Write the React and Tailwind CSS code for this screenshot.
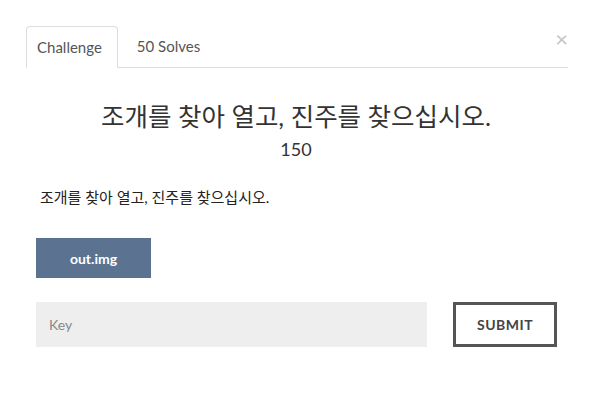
export default function App() {
  const font = { fontFamily: 'Lato, "Noto Sans CJK KR", sans-serif' };
  return (
    <div className="w-[592px] h-[401px] bg-white text-[#333]" style={font}>
      <div className="pt-[26px] px-[24px] relative">
        <button className="absolute right-[24px] top-[28px] text-[22px] leading-none text-[#c4c4c4]">×</button>
        <div className="ml-[2px] flex border-b border-[#dddddd] text-[15px]">
          <div className="-mb-px h-[42px] pl-[10px] pr-[15px] flex items-center border border-[#dddddd] border-b-white rounded-t-[4px] bg-white text-[#555]">
            Challenge
          </div>
          <div className="h-[41px] px-[19px] flex items-center text-[#555]">50 Solves</div>
        </div>

        <div className="text-center mt-[32px]">
          <h2 className="text-[25.5px] leading-[32px] text-[#333]">조개를 찾아 열고, 진주를 찾으십시오.</h2>
          <p className="text-[18px] leading-[24px] mt-[5px] text-[#333]">150</p>
        </div>

        <p className="mt-[26px] ml-[16px] text-[15px] leading-[20px] text-[#222]">조개를 찾아 열고, 진주를 찾으십시오.</p>

        <button className="mt-[31px] ml-[12px] w-[115px] h-[40px] bg-[#5b7290] text-white text-[14px] font-bold">
          out.img
        </button>

        <div className="mt-[24px] ml-[12px] flex items-center">
          <input
            placeholder="Key"
            className="w-[391px] h-[45px] bg-[#eeeeee] px-[13px] text-[14px] placeholder-[#888] outline-none"
          />
          <button className="ml-[26px] w-[104px] h-[45px] border-[3px] border-[#555] text-[14px] font-bold tracking-[0.5px] text-[#444]">
            SUBMIT
          </button>
        </div>
      </div>
    </div>
  );
}
